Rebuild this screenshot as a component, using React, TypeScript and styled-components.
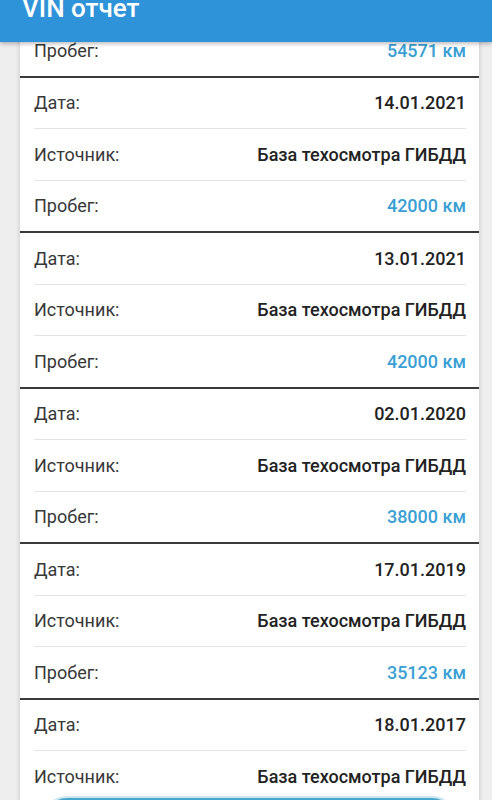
import React, { useLayoutEffect, useRef } from 'react'
import styled, { createGlobalStyle } from 'styled-components'

const GlobalStyle = createGlobalStyle`
  html, body {
    margin: 0;
    padding: 0;
    background: #eeeeee;
    font-family: Roboto, "Noto Sans", "Liberation Sans", sans-serif;
  }
`

const Page = styled.div`
  height: 100vh;
  display: flex;
  flex-direction: column;
  overflow: hidden;
  background: #eeeeee;
`

const Header = styled.header`
  flex: none;
  height: 42px;
  display: flex;
  align-items: flex-start;
  padding: 0 22px;
  background: #2f93d9;
  box-shadow: 0 2px 4px rgba(0, 0, 0, 0.25);
  position: relative;
  z-index: 2;
`

const Title = styled.h1`
  margin: 0;
  font-size: 26px;
  line-height: 17px;
  font-weight: 500;
  color: #ffffff;
`

const Scroller = styled.div`
  flex: 1;
  overflow: hidden;
`

const Card = styled.section`
  margin: 0 13px 0 20px;
  background: #ffffff;
  box-shadow: 0 0 5px rgba(0, 0, 0, 0.18);
`

const Record = styled.div`
  padding: 0 13px 0 14px;
  & + & {
    border-top: 2px solid #3a3a3a;
  }
`

const Row = styled.div`
  height: 50.5px;
  display: flex;
  align-items: center;
  justify-content: space-between;
  font-size: 18px;
  & + & {
    border-top: 1px solid #e4e4e4;
  }
`

const Label = styled.span`
  color: #383838;
`

const Value = styled.span<{ $accent?: boolean }>`
  font-weight: 500;
  color: ${(p) => (p.$accent ? '#3a9fd4' : '#222222')};
`

const FloatingButton = styled.button`
  position: fixed;
  left: 42px;
  right: 35px;
  bottom: -46px;
  height: 50px;
  border-radius: 25px;
  border: 2px solid #cde7f1;
  background: #47a6cb;
  z-index: 3;
`

type Entry = { date?: string; source?: string; mileage: string }

const entries: Entry[] = [
  { mileage: '54571 км' },
  { date: '14.01.2021', source: 'База техосмотра ГИБДД', mileage: '42000 км' },
  { date: '13.01.2021', source: 'База техосмотра ГИБДД', mileage: '42000 км' },
  { date: '02.01.2020', source: 'База техосмотра ГИБДД', mileage: '38000 км' },
  { date: '17.01.2019', source: 'База техосмотра ГИБДД', mileage: '35123 км' },
  { date: '18.01.2017', source: 'База техосмотра ГИБДД', mileage: '31000 км' },
]

const App = (): React.ReactElement => {
  const scrollRef = useRef<HTMLDivElement>(null)

  useLayoutEffect(() => {
    if (scrollRef.current) scrollRef.current.scrollTop = 16.5
  }, [])

  return (
    <Page>
      <GlobalStyle />
      <Header>
        <Title>VIN отчет</Title>
      </Header>
      <Scroller ref={scrollRef}>
        <Card>
          {entries.map((e, i) => (
            <Record key={i}>
              {e.date && (
                <Row>
                  <Label>Дата:</Label>
                  <Value>{e.date}</Value>
                </Row>
              )}
              {e.source && (
                <Row>
                  <Label>Источник:</Label>
                  <Value>{e.source}</Value>
                </Row>
              )}
              <Row>
                <Label>Пробег:</Label>
                <Value $accent>{e.mileage}</Value>
              </Row>
            </Record>
          ))}
        </Card>
      </Scroller>
      <FloatingButton aria-label="Скачать отчет" />
    </Page>
  )
}

export default App
